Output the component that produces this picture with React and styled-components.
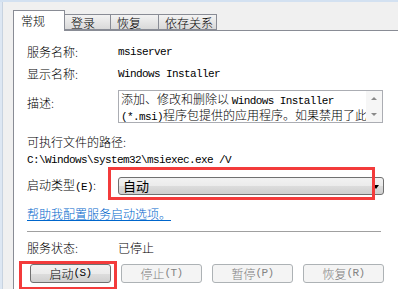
import React from "react";
import styled, { createGlobalStyle } from "styled-components";

const Global = createGlobalStyle`
  body {
    margin: 0;
    background: #f0f0f0;
    font-family: "Noto Sans CJK SC", "Noto Sans", sans-serif;
    font-size: 12px;
    font-weight: 300;
    color: #000;
  }
`;

const Frame = styled.div`
  display: flex;
  width: 398px;
  height: 289px;
  overflow: hidden;
  background: #f0f0f0;
  border-top: 2px solid #d3e1f1;
  box-sizing: border-box;
`;

const Edge = styled.div`
  width: 3px;
  flex: none;
  background: #dde7f3;
  border-right: 1px solid #c8d3e0;
  box-sizing: border-box;
`;

const Body = styled.div`
  flex: 1;
  padding: 8px 0 0 10px;
  display: flex;
  flex-direction: column;
`;

const TabStrip = styled.div`
  display: flex;
  align-items: flex-end;
  height: 20px;
  position: relative;
  z-index: 1;
`;

const Tab = styled.div`
  box-sizing: border-box;
  width: ${(p) => p.w}px;
  height: ${(p) => (p.active ? 21 : 16)}px;
  margin-bottom: ${(p) => (p.active ? -1 : 0)}px;
  margin-left: -1px;
  padding-left: ${(p) => (p.active ? 7 : 6)}px;
  border: 1px solid #898c95;
  border-bottom: ${(p) => (p.active ? "none" : "1px solid #898c95")};
  background: ${(p) =>
    p.active ? "#fff" : "linear-gradient(#f3f3f3, #e6e6e6 50%, #d9d9d9)"};
  line-height: ${(p) => (p.active ? 19 : 15)}px;
  font-size: 12px;
  &:first-child {
    margin-left: 0;
  }
`;

const Panel = styled.div`
  flex: 1;
  background: #fff;
  border-top: 1px solid #898c95;
  border-left: 1px solid #898c95;
  padding: 10px 0 0 13px;
`;

const Field = styled.div`
  display: grid;
  grid-template-columns: 91px 1fr;
  align-items: center;
  min-height: ${(p) => p.h || 22}px;
  margin-top: ${(p) => p.mt || 0}px;
`;

const Label = styled.div`
  line-height: 16px;
  align-self: ${(p) => (p.top ? "start" : "center")};
  padding-top: ${(p) => (p.top ? 5 : 0)}px;
`;

const Mono = styled.span`
  font-family: "Liberation Mono", "DejaVu Sans Mono", monospace;
  font-size: 11px;
  font-weight: 400;
  letter-spacing: -0.6px;
`;

const DescBox = styled.div`
  position: relative;
  width: 265px;
  height: 33px;
  box-sizing: border-box;
  border: 1px solid #abadb3;
  padding: 1px 18px 0 2px;
  line-height: 14px;
  white-space: nowrap;
  overflow: hidden;
`;

const ScrollBar = styled.div`
  position: absolute;
  top: 0;
  right: 0;
  bottom: 0;
  width: 16px;
  background: #f6f6f6;
  display: flex;
  flex-direction: column;
  align-items: center;
  justify-content: space-between;
  padding: 6px 0;
  box-sizing: border-box;
`;

const Arrow = styled.div`
  width: 0;
  height: 0;
  border-left: 3px solid transparent;
  border-right: 3px solid transparent;
  ${(p) =>
    p.up ? "border-bottom: 3px solid #8a8a8a;" : "border-top: 3px solid #8a8a8a;"}
`;

const Line = styled.div`
  line-height: 16px;
  margin-top: ${(p) => p.mt || 0}px;
  white-space: nowrap;
`;

const Combo = styled.div`
  position: relative;
  width: 266px;
  height: 18px;
  box-sizing: border-box;
  border: 1px solid #707070;
  border-radius: 3px;
  background: linear-gradient(#f2f2f2, #ebebeb 50%, #dcdcdc 51%, #cfcfcf);
  padding-left: 4px;
  line-height: 16px;
  font-size: 13px;
  font-weight: 400;
`;

const DropArrow = styled.div`
  position: absolute;
  right: 4px;
  top: 7px;
  width: 0;
  height: 0;
  border-left: 3px solid transparent;
  border-right: 3px solid transparent;
  border-top: 4px solid #000;
`;

const Mark = styled.div`
  position: absolute;
  left: ${(p) => p.l}px;
  top: ${(p) => p.t}px;
  width: ${(p) => p.w}px;
  height: ${(p) => p.h}px;
  border: 3px solid #f33b3b;
  box-sizing: border-box;
  pointer-events: none;
`;

const Link = styled.a`
  color: #0066cc;
  text-decoration: underline;
  line-height: 16px;
  display: inline-block;
  margin-top: 9px;
`;

const Separator = styled.div`
  height: 1px;
  width: 354px;
  background: #a0a0a0;
  margin-top: 9px;
`;

const Buttons = styled.div`
  display: grid;
  grid-template-columns: repeat(4, 81px);
  gap: 10px;
  margin-top: 8px;
  padding-left: 3px;
`;

const Button = styled.div`
  position: relative;
  height: 19px;
  box-sizing: border-box;
  border: 1px solid ${(p) => (p.disabled ? "#adb2b5" : "#707070")};
  border-radius: 3px;
  background: ${(p) =>
    p.disabled
      ? "#f4f4f4"
      : "linear-gradient(#f2f2f2, #ebebeb 50%, #dddddd 51%, #cfcfcf)"};
  color: ${(p) => (p.disabled ? "#838383" : "#000")};
  display: flex;
  align-items: center;
  justify-content: center;
  font-size: 12px;
  line-height: 17px;
`;

const buttons = [
  { text: "启动", key: "(S)" },
  { text: "停止", key: "(T)", disabled: true },
  { text: "暂停", key: "(P)", disabled: true },
  { text: "恢复", key: "(R)", disabled: true },
];

export default function App() {
  return (
    <>
      <Global />
      <Frame>
        <Edge />
        <Body>
          <TabStrip>
            <Tab active w={52}>常规</Tab>
            <Tab w={47}>登录</Tab>
            <Tab w={49}>恢复</Tab>
            <Tab w={59}>依存关系</Tab>
          </TabStrip>
          <Panel>
            <Field>
              <Label>服务名称:</Label>
              <Mono>msiserver</Mono>
            </Field>
            <Field>
              <Label>显示名称:</Label>
              <Mono>Windows Installer</Mono>
            </Field>
            <Field mt={5}>
              <Label top>描述:</Label>
              <DescBox>
                <div>
                  添加、修改和删除以 <Mono>Windows Installer</Mono>
                </div>
                <div>
                  <Mono>(*.msi)</Mono>程序包提供的应用程序。如果禁用了此
                </div>
                <ScrollBar>
                  <Arrow up />
                  <Arrow />
                </ScrollBar>
              </DescBox>
            </Field>
            <Line mt={11}>可执行文件的路径:</Line>
            <Line>
              <Mono>C:\Windows\system32\msiexec.exe /V</Mono>
            </Line>
            <Field mt={7}>
              <Label>
                启动类型<Mono>(E)</Mono>:
              </Label>
              <Combo>
                自动
                <DropArrow />
                <Mark l={-11} t={-11} w={267} h={33} />
              </Combo>
            </Field>
            <Link>帮助我配置服务启动选项。</Link>
            <Separator />
            <Field mt={7} h={16}>
              <Label>服务状态:</Label>
              <div>已停止</div>
            </Field>
            <Buttons>
              {buttons.map((b, i) => (
                <Button key={b.text} disabled={b.disabled}>
                  {b.text}
                  <Mono>{b.key}</Mono>
                  {i === 0 && <Mark l={-12} t={-4} w={98} h={29} />}
                </Button>
              ))}
            </Buttons>
          </Panel>
        </Body>
      </Frame>
    </>
  );
}
